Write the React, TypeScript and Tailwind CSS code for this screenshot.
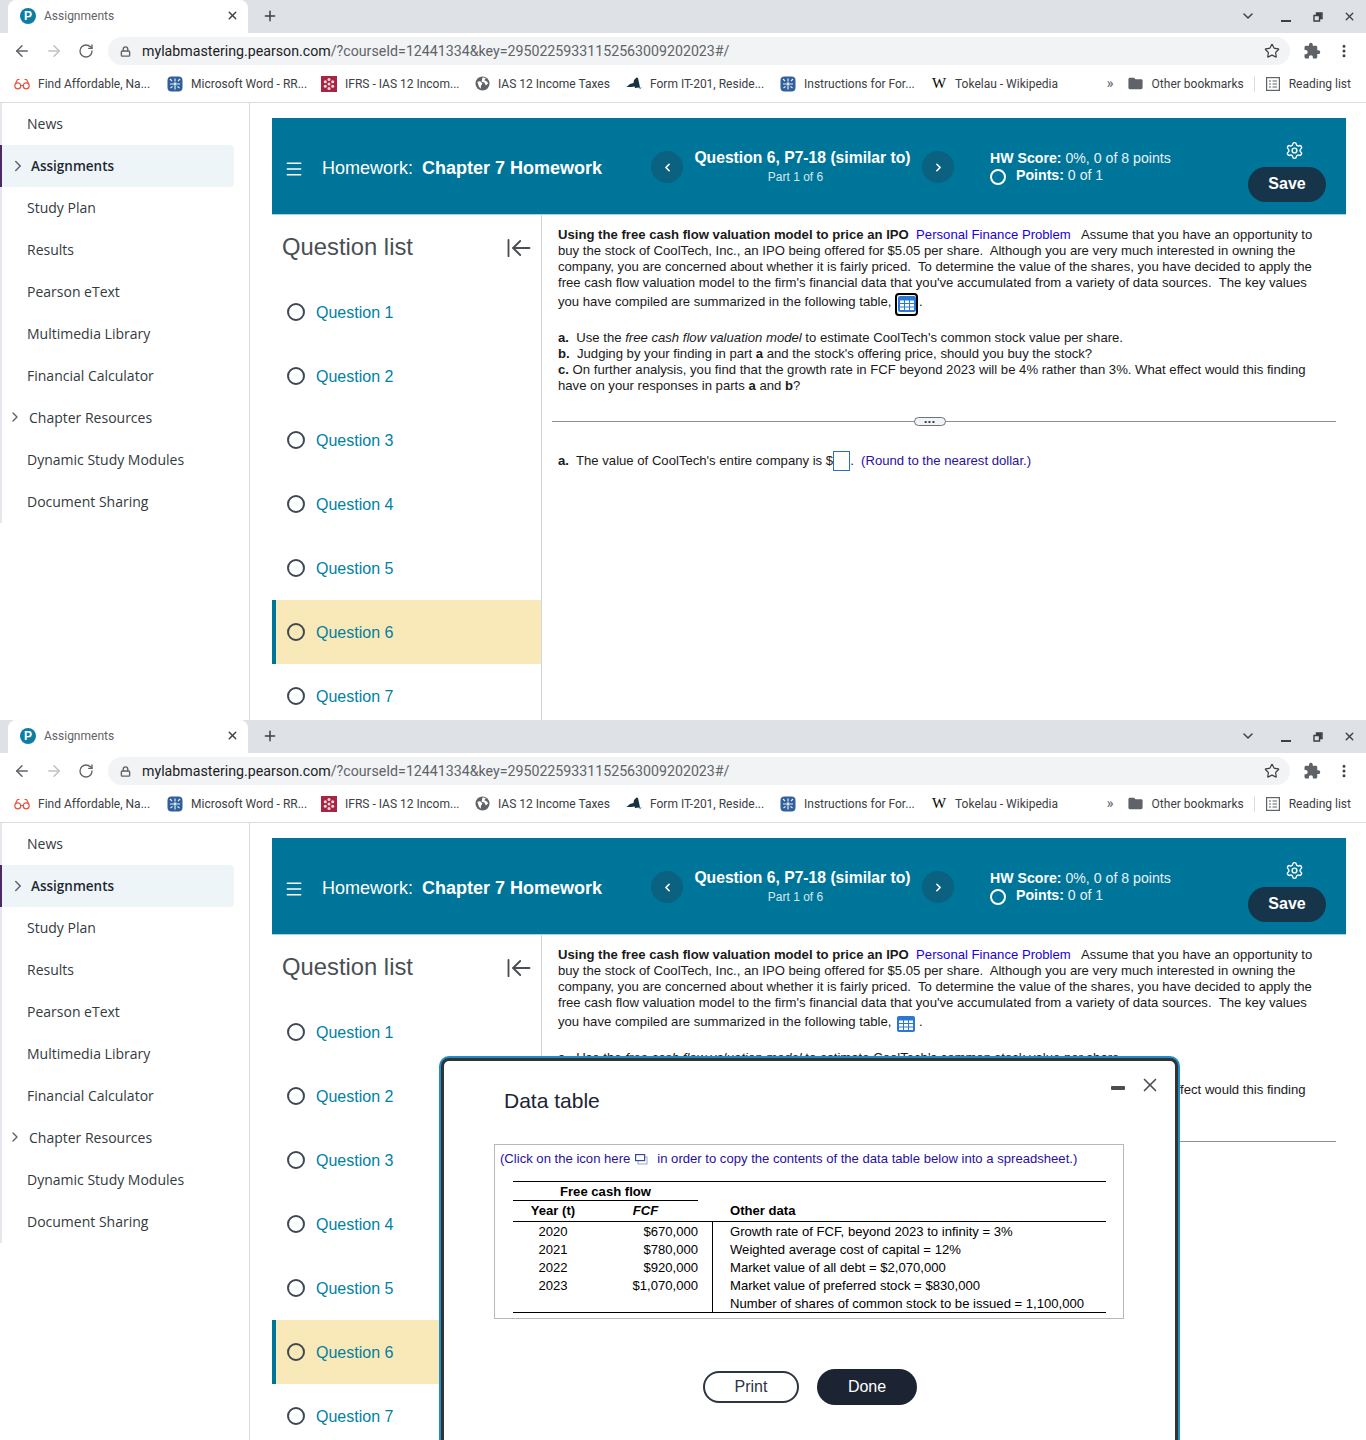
import { ArrowLeft, ArrowLeftToLine, ArrowRight, ChevronDown, ChevronLeft, ChevronRight, Lock, Menu, MoreVertical, Plus, RotateCw, Settings, Star, X } from "lucide-react";
import { MdExtension, MdFolder } from "react-icons/md";

const sideItems = ["News", "Assignments", "Study Plan", "Results", "Pearson eText", "Multimedia Library", "Financial Calculator", "Chapter Resources", "Dynamic Study Modules", "Document Sharing"];
const questions = [1, 2, 3, 4, 5, 6, 7];

const GridIcon = ({ focused }: { focused: boolean }) => (
  <span className={focused ? "mr-[1px] mt-[4px] inline-flex h-[23px] w-[23px] items-center justify-center rounded-[4px] border-2 border-black" : "mx-[1px] mr-[3px] mt-[4px] inline-flex h-[18px] w-[20px] items-center justify-center"}>
    <svg width="18" height="16" viewBox="0 0 18 16">
      <rect width="18" height="16" rx="2" fill="#2b78d4" />
      <path d="M2 4.5h4v2.5H2zM7 4.5h4v2.5H7zM12 4.5h4v2.5h-4zM2 8h4v2.5H2zM7 8h4v2.5H7zM12 8h4v2.5h-4zM2 11.5h4V14H2zM7 11.5h4V14H7zM12 11.5h4V14h-4z" fill="#fff" />
    </svg>
  </span>
);

const Bookmark = ({ w, icon, label }: { w: string; icon: React.ReactNode; label: string }) => (
  <div className={`${w} flex items-center gap-[8px]`}>
    <span className="flex w-[16px] justify-center">{icon}</span>
    <span className="whitespace-nowrap text-[12px] text-[#3c4043]">{label}</span>
  </div>
);

const SealIcon = () => (
  <svg width="16" height="16" viewBox="0 0 16 16">
    <rect x=".5" y=".5" width="15" height="15" rx="4" fill="#2f5f9c" />
    <path d="M3 3l2 2M3 8h3M3.5 12l2-1.5M8 2.5v3M8 10v3.500M13 3l-2 2M13 8h-3M12.500 12l-2-1.500" stroke="#e8eef6" strokeWidth="1.2" />
    <path d="M6.500 6.500h3v3h-3z" fill="#dce6f2" />
  </svg>
);

const BrowserChrome = () => (
  <div className="font-['Roboto',sans-serif]">
    <div className="flex h-[33px] items-center bg-[#dee1e6]">
      <div className="ml-[8px] flex h-[33px] w-[240px] items-center rounded-t-[8px] bg-white pb-[2px] pl-[12px] pr-[9px]">
        <span className="flex h-[16px] w-[16px] items-center justify-center rounded-full bg-[#0d7ea3] font-['Liberation_Sans',sans-serif] text-[12px] font-bold text-white">P</span>
        <span className="ml-[8px] flex-1 text-[12px] text-[#5f6368]">Assignments</span>
        <X size={13} strokeWidth={2.5} className="text-[#3c4043]" />
      </div>
      <Plus size={16} strokeWidth={2.2} className="mb-[2px] ml-[14px] text-[#3c4043]" />
      <ChevronDown size={16} strokeWidth={2.2} className="mb-[2px] ml-auto text-[#3c4043]" />
      <span className="ml-[25px] mt-[8px] h-[2px] w-[10px] bg-[#3c4043]" />
      <svg width="10" height="10" viewBox="0 0 10 10" className="ml-[22px] text-[#3c4043]">
        <path d="M3.500 1h5.500v5.500H7.500V2.500H3.500zM1 3.500h5.500V9H1z" fill="none" stroke="currentColor" strokeWidth="1.400" />
      </svg>
      <X size={13} strokeWidth={2.5} className="ml-[20px] mr-[10px] text-[#3c4043]" />
    </div>
    <div className="flex h-[36px] items-center bg-white">
      <ArrowLeft size={18} strokeWidth={2} className="ml-[13px] text-[#5f6368]" />
      <ArrowRight size={18} strokeWidth={2} className="ml-[14px] text-[#bdc1c6]" />
      <RotateCw size={16} strokeWidth={2} className="ml-[15px] text-[#5f6368]" />
      <div className="ml-[14px] flex h-[28px] w-[1182px] items-center rounded-full bg-[#f1f3f4] pl-[12px] pr-[10px]">
        <Lock size={11} strokeWidth={3} className="text-[#5f6368]" />
        <span className="ml-[11px] flex-1 whitespace-nowrap pt-[2px] text-[14.200px] text-[#5f6368]">
          <span className="text-[#202124]">mylabmastering.pearson.com</span>/?courseId=12441334&amp;key=29502259331152563009202023#/
        </span>
        <Star size={16} strokeWidth={1.8} className="text-[#3c4043]" />
      </div>
      <MdExtension size={18} className="ml-[13px] text-[#5f6368]" />
      <MoreVertical size={16} strokeWidth={2.5} className="ml-[15px] text-[#3c4043]" />
    </div>
    <div className="flex h-[34px] items-center border-b border-[#dadce0] bg-white pb-[4px] pl-[14px] pr-[15px]">
      <Bookmark w="w-[153px]" label="Find Affordable, Na..." icon={
        <svg width="16" height="12" viewBox="0 0 16 12" fill="none" stroke="#e8503a" strokeWidth="1.200"><circle cx="3.800" cy="7.800" r="3" /><circle cx="12.200" cy="7.800" r="3" /><path d="M6.800 7.500h2.400M1.200 6l2.300-4.500h2M14.800 6l-2.300-4.500h-2" /></svg>
      } />
      <Bookmark w="w-[154px]" label="Microsoft Word - RR..." icon={<SealIcon />} />
      <Bookmark w="w-[153px]" label="IFRS - IAS 12 Incom..." icon={
        <svg width="16" height="16" viewBox="0 0 16 16"><rect width="16" height="16" fill="#a92440" /><g fill="#f6dbe1"><circle cx="8" cy="3.500" r="1.500" /><circle cx="8" cy="8" r="1.500" /><circle cx="8" cy="12.500" r="1.500" /><circle cx="4.300" cy="5.700" r="1.500" /><circle cx="11.700" cy="5.700" r="1.500" /><circle cx="4.300" cy="10.300" r="1.500" /><circle cx="11.700" cy="10.300" r="1.500" /></g></svg>
      } />
      <Bookmark w="w-[152px]" label="IAS 12 Income Taxes" icon={
        <svg width="15" height="15" viewBox="0 0 16 16"><circle cx="8" cy="8" r="7.500" fill="#5f6368" /><path d="M2.500 6l3-.5L8 8 6.500 10l-.5 3.500L4 11zM8 1.500l3.500.5L10 4.500l3 1.500 1 2-2.500 2-1.500-3-3-1z" fill="#fff" /></svg>
      } />
      <Bookmark w="w-[154px]" label="Form IT-201, Reside..." icon={
        <svg width="16" height="13" viewBox="0 0 16 13"><path d="M.5 10l3.500-3 3.500-1 .5-3 2.500-2.500 1.500.5 1.500 7 .5 3 2-1-2 2-1-1.500-4 .5-.5-1.500-3.500.5z" fill="#17323d" /></svg>
      } />
      <Bookmark w="w-[151px]" label="Instructions for For..." icon={<SealIcon />} />
      <Bookmark w="w-[160px]" label="Tokelau - Wikipedia" icon={<span className="font-['Liberation_Serif',serif] text-[15px] leading-none text-black">W</span>} />
      <div className="ml-auto flex items-center text-[12px] text-[#3c4043]">
        <span className="text-[15px] leading-none text-[#5f6368]">»</span>
        <MdFolder size={17} className="ml-[13px] text-[#5f6368]" />
        <span className="ml-[8px]">Other bookmarks</span>
        <span className="ml-[10px] h-[16px] w-px bg-[#dadce0]" />
        <svg width="14" height="14" viewBox="0 0 14 14" fill="none" stroke="#5f6368" strokeWidth="1.200" className="ml-[11px]"><rect x=".6" y=".6" width="12.800" height="12.800" /><path d="M3 4h2M3 7h2M3 10h2M6.500 4H11M6.500 7H11M6.500 10H11" /></svg>
        <span className="ml-[9px]">Reading list</span>
      </div>
    </div>
  </div>
);

const Sidebar = () => (
  <aside className="h-full w-[250px] shrink-0 border-r border-[#d9d9d9] bg-white font-['Open_Sans',sans-serif] text-[14px] text-[#333a40]">
    <div className="border-l-2 border-[#e6e6ef] pr-[15px]">
      {sideItems.map((item) => {
        if (item === "Assignments") {
          return (
            <div key={item} className="-ml-[2px] flex h-[42px] items-center rounded-r-[4px] border-l-2 border-[#4b2a68] bg-[#eef5f9] pl-[7px] text-[13.500px] font-semibold text-[#1f2730]">
              <ChevronRight size={18} strokeWidth={2} className="text-[#5f6368]" />
              <span className="ml-[4px]">{item}</span>
            </div>
          );
        }
        if (item === "Chapter Resources") {
          return (
            <div key={item} className="flex h-[42px] items-center pb-[2px] pl-[5px]">
              <ChevronRight size={16} strokeWidth={2} className="text-[#5f6368]" />
              <span className="ml-[6px]">{item}</span>
            </div>
          );
        }
        return <div key={item} className="flex h-[42px] items-center pb-[2px] pl-[25px]">{item}</div>;
      })}
    </div>
  </aside>
);

const QuestionList = () => (
  <div className="w-[269px] shrink-0 font-['Liberation_Sans',sans-serif]">
    <div className="flex h-[65px] items-center justify-between pl-[10px] pr-[8px]">
      <span className="mb-[2px] text-[23.800px] text-[#4a4f55]">Question list</span>
      <ArrowLeftToLine size={28} strokeWidth={1.6} className="text-[#4a4f55]" />
    </div>
    {questions.map((n) => (
      <div key={n} className={n === 6 ? "flex h-[64px] items-center border-l-4 border-[#00759a] bg-[#f9e9b8] pl-[11px]" : "flex h-[64px] items-center pl-[15px]"}>
        <span className="h-[18px] w-[18px] rounded-full border-2 border-[#3f4850]" />
        <span className="ml-[11px] mt-[2px] text-[16px] text-[#007fa3]">Question {n}</span>
      </div>
    ))}
  </div>
);

const QuestionText = ({ focused }: { focused: boolean }) => (
  <div className="min-w-0 flex-1 border-l border-[#d0d4dc] pl-[10px] pt-[12px] font-['Liberation_Sans',sans-serif] text-[13.140px] leading-[16px] text-[#1a1a1a]">
    <div className="whitespace-pre pl-[6px]">
      <div><b>Using the free cash flow valuation model to price an IPO</b>  <span className="text-[#1a00e0]">Personal Finance Problem</span>   Assume that you have an opportunity to</div>
      <div>buy the stock of CoolTech, Inc., an IPO being offered for $5.05 per share.  Although you are very much interested in owning the</div>
      <div>company, you are concerned about whether it is fairly priced.  To determine the value of the shares, you have decided to apply the</div>
      <div>free cash flow valuation model to the firm's financial data that you've accumulated from a variety of data sources.  The key values</div>
      <div className="flex h-[22px] items-center">you have compiled are summarized in the following table, <GridIcon focused={focused} />.</div>
      <div className="mt-[17px]"><b>a.</b>  Use the <i>free cash flow valuation model</i> to estimate CoolTech's common stock value per share.</div>
      <div><b>b.</b>  Judging by your finding in part <b>a</b> and the stock's offering price, should you buy the stock?</div>
      <div><b>c.</b> On further analysis, you find that the growth rate in FCF beyond 2023 will be 4% rather than 3%. What effect would this finding</div>
      <div>have on your responses in parts <b>a</b> and <b>b</b>?</div>
    </div>
    <div className="relative mt-[27px] h-px w-[784px] bg-[#8a8f98]">
      <span className="absolute left-[362px] top-[-4px] flex h-[9px] w-[32px] items-center justify-center rounded-full border border-[#6b7280] bg-[#f2f3f5] text-[8px] leading-none tracking-[1px] text-[#333]">•••</span>
    </div>
    <div className="mt-[29px] flex h-[20px] items-center whitespace-pre pl-[6px]">
      <b>a.</b>  The value of CoolTech's entire company is $<span className="h-[20px] w-[17px] border border-[#2b6cc4]" />.  <span className="text-[#2a0fa0]">(Round to the nearest dollar.)</span>
    </div>
  </div>
);

const Header = () => (
  <div className="flex h-[97px] shrink-0 items-center border-b border-[#a8d4e2] bg-[#00759a] font-['Liberation_Sans',sans-serif] text-white">
    <div className="mt-[5px] flex w-[379px] items-center pl-[12px]">
      <Menu size={20} strokeWidth={1.8} />
      <span className="ml-[18px] whitespace-pre text-[18px]">Homework:  <b className="-ml-[1px]">Chapter 7 Homework</b></span>
    </div>
    <span className="mt-[2px] flex h-[32px] w-[32px] items-center justify-center rounded-full bg-[#0a6180]"><ChevronLeft size={13} strokeWidth={3} /></span>
    <div className="w-[239px] text-center">
      <div className="text-[15.700px] font-bold leading-[20px]">Question 6, P7-18 (similar to)</div>
      <div className="mr-[14px] mt-[1px] text-[12px] leading-[16px] text-[#d5e8ef]">Part 1 of 6</div>
    </div>
    <span className="mt-[2px] flex h-[32px] w-[32px] items-center justify-center rounded-full bg-[#0a6180]"><ChevronRight size={13} strokeWidth={3} /></span>
    <div className="ml-[36px] mt-[2px] w-[258px] text-[14.150px]">
      <div className="leading-[18px] text-[#e6f1f5]"><b className="text-white">HW Score:</b> 0%, 0 of 8 points</div>
      <div className="flex h-[19px] items-center text-[#e6f1f5]">
        <span className="mt-[2px] h-[16px] w-[16px] rounded-full border-2 border-white" />
        <b className="ml-[10px] text-white">Points:</b>&nbsp;0 of 1
      </div>
    </div>
    <div className="mt-[10px] flex w-[78px] flex-col items-center">
      <Settings size={19} strokeWidth={1.8} className="ml-[14px]" />
      <span className="mt-[7px] flex h-[35px] w-[78px] items-center justify-center rounded-full bg-[#17354a] text-[16px] font-bold">Save</span>
    </div>
  </div>
);

const DataModal = () => (
  <div className="absolute left-[441px] top-[338px] h-[400px] w-[737px] rounded-[8px] border-[3px] border-[#333] bg-white font-['Liberation_Sans',sans-serif] shadow-[0_0_0_2px_#1c8fc9]">
    <div className="absolute left-0 right-0 top-0 flex items-start">
      <span className="ml-[60px] mt-[28px] text-[21px] leading-[24px] text-[#1c2433]">Data table</span>
      <span className="ml-auto mt-[25px] h-[4px] w-[14px] rounded-[1px] bg-[#4a4f55]" />
      <X size={22} strokeWidth={1.8} className="ml-[14px] mr-[14px] mt-[13px] text-[#4a4f55]" />
    </div>
    <div className="ml-[50px] mt-[83px] h-[175px] w-[630px] border border-[#b8b8b8] px-[18px] pt-[6px] text-[13.100px] leading-[16px] text-black">
      <div className="-ml-[13px] flex items-center whitespace-pre text-[#2a0fa0]">
        (Click on the icon here
        <svg width="13" height="11" viewBox="0 0 13 11" fill="none" className="ml-[5px] mr-[9px] shrink-0"><rect x="3" y="3" width="9" height="7" stroke="#9aa3d4" /><rect x=".6" y=".6" width="9" height="6" fill="#fff" stroke="#3d4a8f" strokeWidth="1.200" /></svg>
        in order to copy the contents of the data table below into a spreadsheet.)
      </div>
      <div className="mt-[14px] w-[593px] border-y border-black">
        <div className="flex">
          <div className="w-[185px] text-center">
            <div className="flex h-[19px] items-center justify-center border-b border-black pt-[2px] font-bold">Free cash flow</div>
            <div className="flex h-[20px] items-center font-bold">
              <span className="w-[80px] text-center">Year (t)</span>
              <span className="w-[105px] text-center italic">FCF</span>
            </div>
          </div>
          <div className="flex flex-1 items-end pb-[2px] pl-[32px] font-bold">Other data</div>
        </div>
        <div className="flex border-t border-black">
          <div className="w-[185px] shrink-0">
            {[["2020", "$670,000"], ["2021", "$780,000"], ["2022", "$920,000"], ["2023", "$1,070,000"]].map((r) => (
              <div key={r[0]} className="flex h-[18px] leading-[20px]">
                <span className="w-[80px] text-center">{r[0]}</span>
                <span className="w-[105px] text-right">{r[1]}</span>
              </div>
            ))}
          </div>
          <div className="ml-[14px] h-[90px] flex-1 whitespace-pre border-l border-black pl-[17px]">
            <div className="h-[18px] leading-[20px]">Growth rate of FCF, beyond 2023 to infinity = 3%</div>
            <div className="h-[18px] leading-[20px]">Weighted average cost of capital = 12%</div>
            <div className="h-[18px] leading-[20px]">Market value of all debt = $2,070,000</div>
            <div className="h-[18px] leading-[20px]">Market value of preferred stock = $830,000</div>
            <div className="h-[18px] leading-[20px]">Number of shares of common stock to be issued = 1,100,000</div>
          </div>
        </div>
      </div>
    </div>
    <div className="ml-[259px] mt-[50px] flex items-center">
      <span className="flex h-[32px] w-[96px] items-center justify-center rounded-full border-2 border-[#2c3540] text-[16px] text-[#2c3540]">Print</span>
      <span className="ml-[18px] flex h-[36px] w-[100px] items-center justify-center rounded-full bg-[#1c2433] text-[16px] text-white">Done</span>
    </div>
  </div>
);

const Screen = ({ withModal }: { withModal: boolean }) => (
  <div className="relative h-[720px] overflow-hidden bg-white">
    <BrowserChrome />
    <div className="flex h-[617px]">
      <Sidebar />
      <main className="flex min-w-0 flex-1 flex-col pl-[22px] pr-[20px] pt-[15px]">
        <Header />
        <div className="flex min-h-0 flex-1">
          <QuestionList />
          <QuestionText focused={!withModal} />
        </div>
      </main>
    </div>
    {withModal && <DataModal />}
  </div>
);

export default function App() {
  return (
    <div className="h-[1440px] w-[1366px] overflow-hidden bg-white">
      <Screen withModal={false} />
      <Screen withModal />
    </div>
  );
}
